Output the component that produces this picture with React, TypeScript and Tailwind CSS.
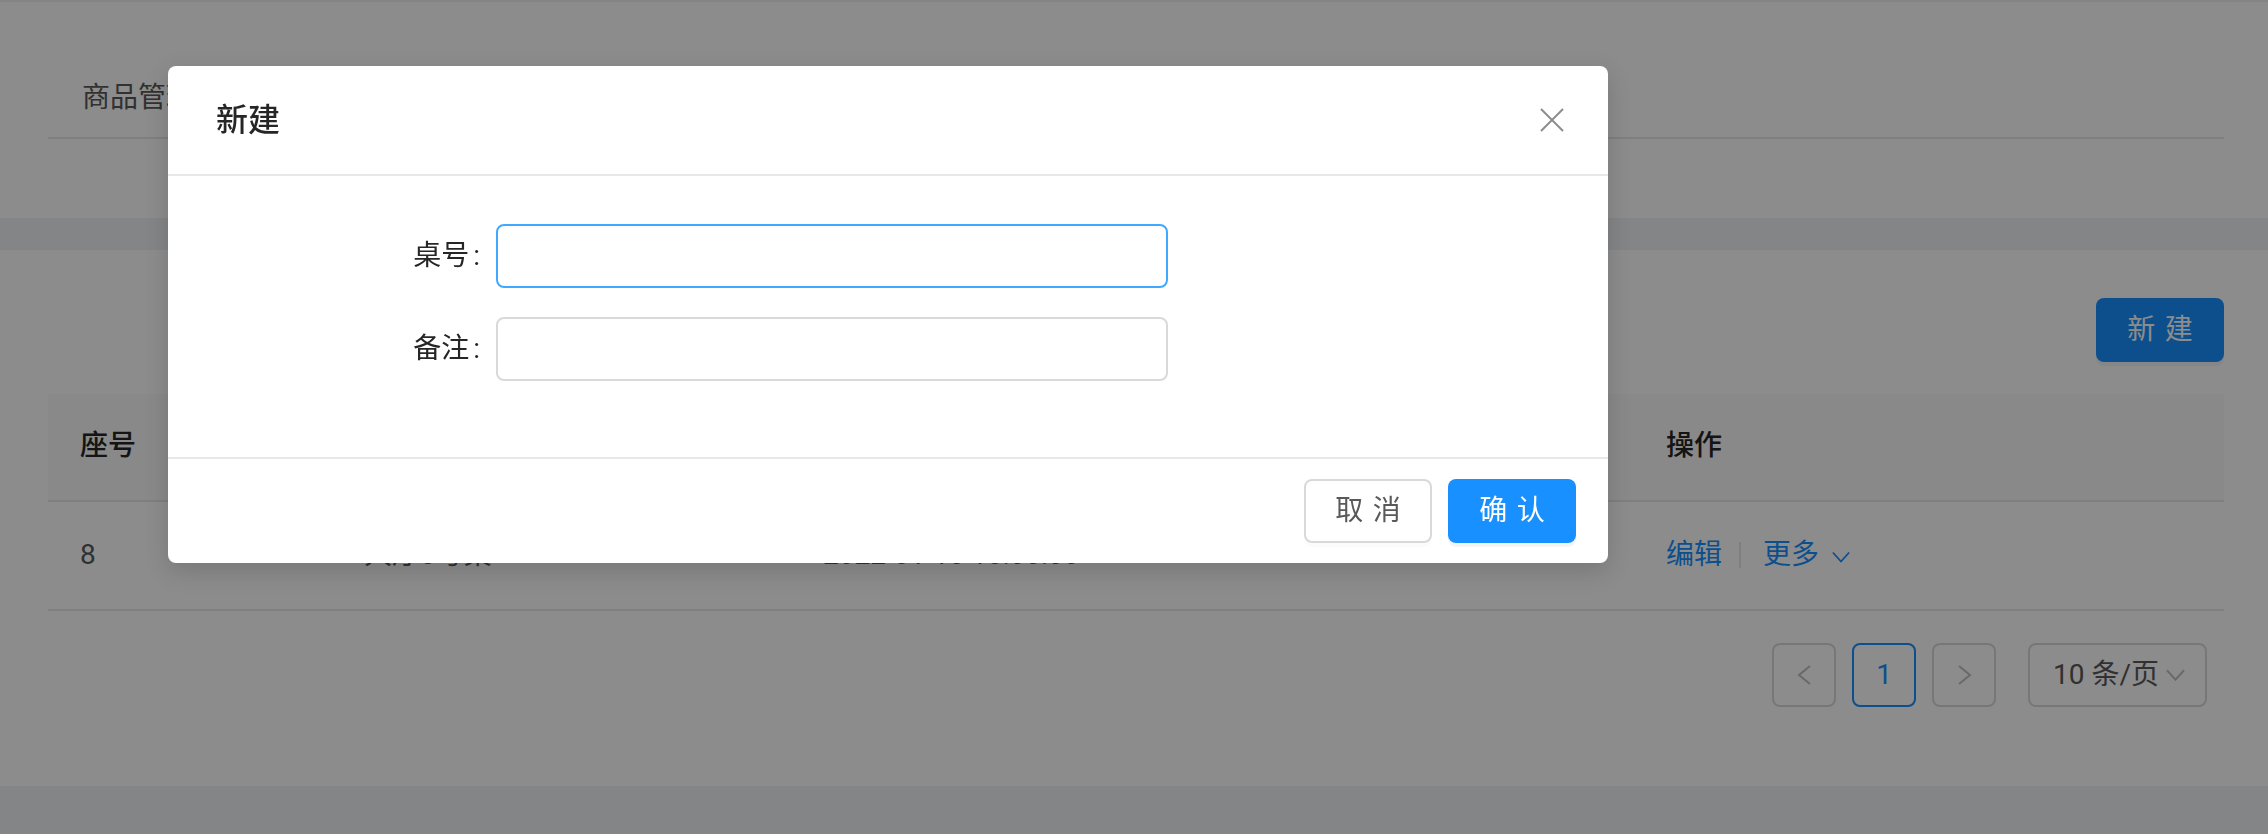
import { ReactNode } from 'react';

const font = "font-[family-name:Roboto,'Noto_Sans_CJK_SC',sans-serif]";

function Chevron({ dir, className }: { dir: 'left' | 'right' | 'down'; className?: string }) {
  if (dir === 'down') {
    return (
      <svg viewBox="0 0 20 12" className={className} fill="none" stroke="currentColor" strokeWidth="2">
        <polyline points="1,1 10,11 19,1" />
      </svg>
    );
  }
  const pts = dir === 'left' ? '13,1 2,10 13,19' : '2,1 13,10 2,19';
  return (
    <svg viewBox="0 0 15 20" className={className} fill="none" stroke="currentColor" strokeWidth="2">
      <polyline points={pts} />
    </svg>
  );
}

function FormRow({ label, focused, className }: { label: string; focused?: boolean; className?: string }) {
  return (
    <div className={`flex items-center ${className ?? ''}`}>
      <div className="flex w-[280px] items-center justify-end text-[28px] leading-[44px] text-[#262626]">
        <span>{label}</span>
        <span className="ml-[4px] mr-[16px]">:</span>
      </div>
      <div
        className={`h-[64px] w-[672px] rounded-[8px] border-2 bg-white ${
          focused ? 'border-[#40a9ff]' : 'border-[#d9d9d9]'
        }`}
      />
    </div>
  );
}

function PageBox({ children, active }: { children: ReactNode; active?: boolean }) {
  return (
    <div
      className={`flex h-[64px] w-[64px] items-center justify-center rounded-[8px] border-2 bg-white ${
        active ? 'border-[#1890ff] text-[#1890ff]' : 'border-[#d9d9d9] text-[#bfbfbf]'
      }`}
    >
      {children}
    </div>
  );
}

export default function App() {
  return (
    <div className={`relative min-h-[834px] bg-[#f0f2f5] pt-[2px] ${font}`}>
      {/* 顶部标签 */}
      <div className="h-[216px] bg-white pl-[48px] pr-[44px]">
        <div className="border-b-2 border-[#e8e8e8] pb-[17px] pl-[34px] pt-[74px] text-[28px] leading-[44px] text-[#595959]">
          商品管理
        </div>
      </div>

      {/* 列表 */}
      <div className="mt-[32px] h-[536px] bg-white pl-[48px] pr-[44px] pt-[48px]">
        <div className="flex justify-end">
          <button className="flex h-[64px] w-[128px] items-center justify-center rounded-[8px] bg-[#1890ff] text-[28px] text-white shadow-[0_4px_0_rgba(0,0,0,0.045)]">
            <span className="-mr-[0.34em] tracking-[0.34em]">新建</span>
          </button>
        </div>

        <div className="mt-[32px] text-[28px] leading-[44px]">
          <div className="flex h-[108px] items-center border-b-2 border-[#e8e8e8] bg-[#fafafa] pb-[2px] font-medium text-[#262626]">
            <div className="w-[284px] px-[32px]">座号</div>
            <div className="w-[459px] px-[32px]">座位名称</div>
            <div className="w-[421px] px-[32px]">创建时间</div>
            <div className="w-[422px] px-[32px]">备注</div>
            <div className="flex-1 px-[32px]">操作</div>
          </div>
          <div className="flex h-[109px] items-center border-b-2 border-[#e8e8e8] pb-[2px] text-[#595959]">
            <div className="w-[284px] px-[32px]">8</div>
            <div className="w-[459px] px-[32px]">大厅8号桌</div>
            <div className="w-[421px] px-[32px]">2022-01-18 18:00:00</div>
            <div className="w-[422px] px-[32px]" />
            <div className="flex flex-1 items-center px-[32px] text-[#1890ff]">
              <span>编辑</span>
              <span className="ml-[17px] mr-[22px] h-[26px] w-[2px] bg-[#e8e8e8]" />
              <span>更多</span>
              <Chevron dir="down" className="ml-[13px] mt-[4px] h-[12px] w-[18px]" />
            </div>
          </div>
        </div>

        <div className="mr-[17px] mt-[32px] flex items-center justify-end text-[28px]">
          <PageBox>
            <Chevron dir="left" className="h-[20px] w-[15px]" />
          </PageBox>
          <div className="ml-[16px]">
            <PageBox active>1</PageBox>
          </div>
          <div className="ml-[16px]">
            <PageBox>
              <Chevron dir="right" className="h-[20px] w-[15px]" />
            </PageBox>
          </div>
          <div className="ml-[32px] flex h-[64px] w-[179px] items-center rounded-[8px] border-2 border-[#d9d9d9] bg-white pl-[23px] text-[#595959]">
            <span>10 条/页</span>
            <Chevron dir="down" className="ml-[7px] h-[12px] w-[19px] text-[#bfbfbf]" />
          </div>
        </div>
      </div>

      {/* 遮罩 */}
      <div className="fixed inset-0 bg-black/45" />

      {/* 新建弹窗 */}
      <div className="absolute left-[168px] top-[66px] w-[1440px] rounded-[8px] bg-white shadow-[0_8px_24px_rgba(0,0,0,0.15)]">
        <div className="flex h-[110px] items-center border-b-2 border-[#e8e8e8] pl-[48px]">
          <div className="flex-1 text-[32px] font-medium leading-[44px] text-[#262626]">新建</div>
          <div className="flex h-[108px] w-[112px] items-center justify-center text-[#8c8c8c]">
            <svg viewBox="0 0 24 24" className="h-[24px] w-[24px]" fill="none" stroke="currentColor" strokeWidth="2">
              <line x1="1" y1="1" x2="23" y2="23" />
              <line x1="23" y1="1" x2="1" y2="23" />
            </svg>
          </div>
        </div>

        <div className="px-[48px] pb-[76px] pt-[48px]">
          <FormRow label="桌号" focused />
          <FormRow label="备注" className="mt-[29px]" />
        </div>

        <div className="flex h-[106px] items-center justify-end gap-[16px] border-t-2 border-[#e8e8e8] px-[32px] text-[28px]">
          <button className="flex h-[64px] w-[128px] items-center justify-center rounded-[8px] border-2 border-[#d9d9d9] bg-white text-[#595959] shadow-[0_4px_0_rgba(0,0,0,0.015)]">
            <span className="-mr-[0.34em] tracking-[0.34em]">取消</span>
          </button>
          <button className="flex h-[64px] w-[128px] items-center justify-center rounded-[8px] bg-[#1890ff] text-white shadow-[0_4px_0_rgba(0,0,0,0.045)]">
            <span className="-mr-[0.34em] tracking-[0.34em]">确认</span>
          </button>
        </div>
      </div>
    </div>
  );
}
